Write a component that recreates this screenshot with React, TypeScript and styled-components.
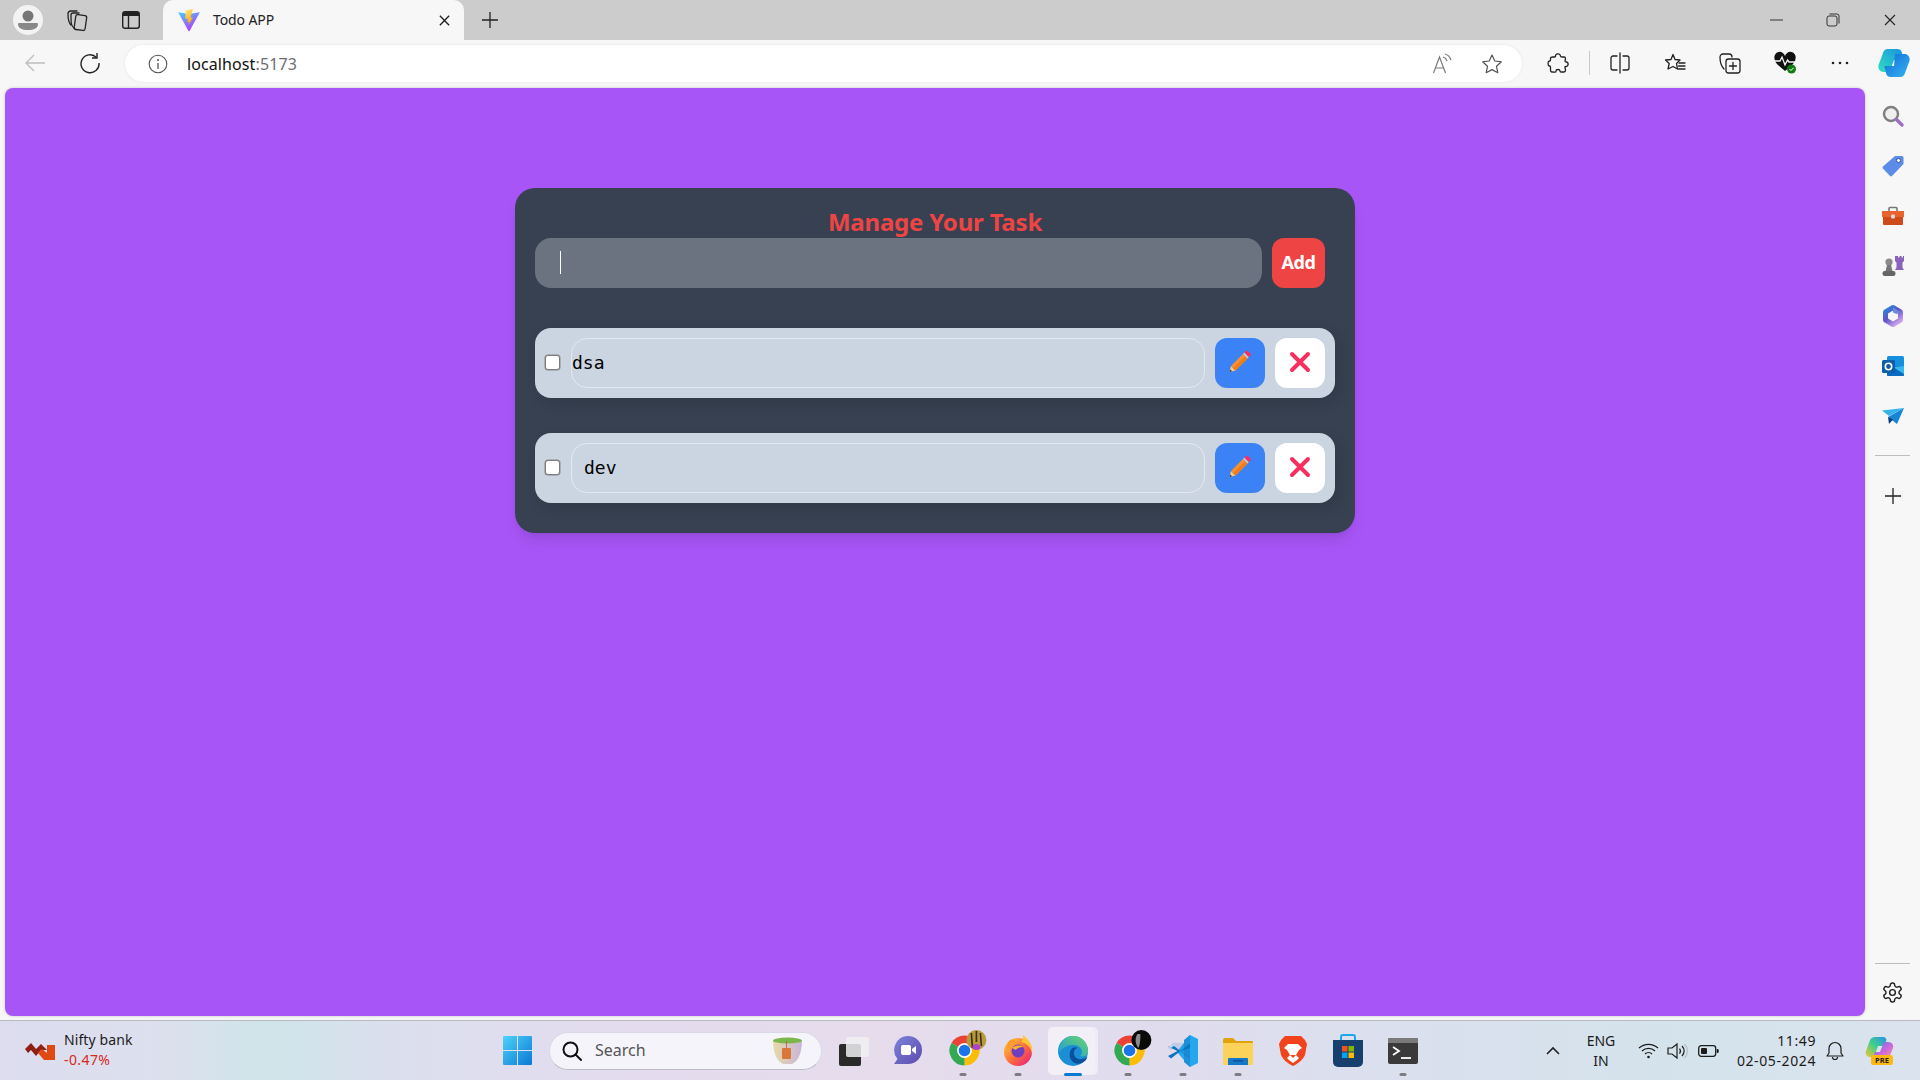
import React from "react";
import styled, { createGlobalStyle } from "styled-components";

const Global = createGlobalStyle`
  html, body { margin: 0; padding: 0; height: 100%; overflow: hidden; }
  body { font-family: "Noto Sans", "Open Sans", sans-serif; background: #f7f7f7; }
  #root { height: 100%; }
  * { box-sizing: border-box; }
`;

const Screen = styled.div`
  width: 1920px;
  height: 1080px;
  display: flex;
  flex-direction: column;
`;

/* ---------- browser chrome ---------- */
const TabStrip = styled.header`
  height: 40px;
  flex: none;
  background: #cccccc;
  display: flex;
  align-items: stretch;
  padding-left: 13px;
`;
const Avatar = styled.div`
  width: 30px;
  height: 30px;
  margin: 5px 8px 5px 0;
  border-radius: 50%;
  background: #f3f3f3;
  display: flex;
  align-items: center;
  justify-content: center;
`;
const Slot = styled.div<{ $w: number; $end?: boolean }>`
  width: ${(p) => p.$w}px;
  flex: none;
  display: flex;
  align-items: center;
  justify-content: ${(p) => (p.$end ? "flex-end" : "center")};
  position: relative;
`;
const Tab = styled.div`
  width: 301px;
  margin-left: 6px;
  background: #f7f7f7;
  border-radius: 10px 10px 0 0;
  display: flex;
  align-items: center;
  padding-left: 14px;
  font-size: 14px;
  color: #222;
`;
const TabTitle = styled.span`
  margin: 0 0 2px 12px;
  flex: 1;
  letter-spacing: -0.1px;
`;
const TabClose = styled.div`
  width: 40px;
  display: flex;
  justify-content: center;
`;
const WindowControls = styled.div`
  margin-left: auto;
  margin-right: 2px;
  display: flex;
`;
const Toolbar = styled.nav`
  height: 48px;
  flex: none;
  background: #f7f7f7;
  display: flex;
  align-items: flex-start;
  padding-left: 7px;
`;
const ToolSlot = styled(Slot)`
  height: 46px;
`;
const Address = styled.div`
  width: 1398px;
  height: 37px;
  margin: 5px 9px 0 8px;
  background: #ffffff;
  border-radius: 19px;
  display: flex;
  align-items: center;
  padding: 0 6px 0 23px;
  box-shadow: 0 0 3px rgba(0, 0, 0, 0.08);
  ${ToolSlot} { height: 37px; }
`;
const Url = styled.span`
  margin-left: 19px;
  flex: 1;
  font-size: 16px;
  color: #111;
  letter-spacing: 0.1px;
`;
const Port = styled.span`
  color: #6d6d6d;
`;
const ToolDivider = styled.div`
  width: 1px;
  height: 24px;
  margin: 11px 2px 0 4px;
  background: #c9c9c9;
  flex: none;
`;

const Middle = styled.div`
  flex: 1;
  min-height: 0;
  display: flex;
  padding-left: 5px;
  background: #f7f7f7;
`;
const Page = styled.main`
  width: 1860px;
  height: 928px;
  background: #a855f7;
  border-radius: 8px;
  padding-top: 100px;
  box-shadow: 0 0 3px rgba(0, 0, 0, 0.2);
`;
const Sidebar = styled.aside`
  flex: 1;
  display: flex;
  flex-direction: column;
  align-items: center;
`;
const SideIcon = styled.div`
  height: 50px;
  width: 100%;
  display: flex;
  align-items: center;
  justify-content: center;
  flex: none;
`;
const SideTop = styled.div`
  height: 3px;
  flex: none;
`;
const SideRule = styled.div`
  width: 35px;
  height: 1px;
  background: #bdbdbd;
  flex: none;
  margin: 14px 0 15px;
`;
const SideSpacer = styled.div`
  flex: 1;
`;
const SideFoot = styled.div`
  flex: none;
  width: 100%;
  display: flex;
  flex-direction: column;
  align-items: center;
  margin-bottom: 3px;
`;
const SideRuleFoot = styled(SideRule)`
  margin: 0 0 3px;
`;

/* ---------- todo app ---------- */
const Card = styled.section`
  width: 840px;
  height: 345px;
  margin: 0 auto;
  background: #374151;
  border-radius: 20px;
  padding: 20px;
  box-shadow: 0 10px 15px -3px rgba(0, 0, 0, 0.1), 0 4px 6px -4px rgba(0, 0, 0, 0.1);
`;
const Title = styled.h1`
  margin: 0;
  height: 30px;
  line-height: 28px;
  text-align: center;
  font-size: 24px;
  font-weight: 700;
  color: #ef4444;
  letter-spacing: -0.2px;
`;
const AddForm = styled.form`
  display: flex;
  gap: 10px;
  margin: 0 10px 40px 0;
`;
const AddField = styled.div`
  flex: 1;
  height: 50px;
  background: #6b7280;
  border-radius: 16px;
  display: flex;
  align-items: center;
  padding-left: 25px;
`;
const Caret = styled.span`
  width: 1px;
  height: 23px;
  margin-bottom: 2px;
  background: #ffffff;
  flex: none;
`;
const AddInput = styled.input`
  flex: 1;
  height: 100%;
  background: transparent;
  border: 0;
  outline: 0;
  padding: 0;
  color: #fff;
`;
const AddButton = styled.button`
  width: 53px;
  height: 50px;
  background: #ef4444;
  color: #ffffff;
  border: 0;
  border-radius: 12px;
  font: 700 18px "Noto Sans", sans-serif;
  letter-spacing: -0.4px;
  padding: 0 0 2px;
`;
const TodoList = styled.ul`
  list-style: none;
  margin: 0;
  padding: 0;
  display: flex;
  flex-direction: column;
  gap: 35px;
`;
const TodoRow = styled.li`
  height: 70px;
  background: #cbd5e1;
  border-radius: 16px;
  padding: 10px;
  display: flex;
  align-items: center;
  box-shadow: 5px 5px 15px rgba(0, 0, 0, 0.12);
`;
const Check = styled.input`
  appearance: none;
  width: 15px;
  height: 15px;
  margin: 0 11px 1px 0;
  flex: none;
  background: #ffffff;
  border: 1px solid #7d7d7d;
  border-radius: 3px;
  box-shadow: 0 0 0 0.5px #8a8a8a;
`;
const TodoText = styled.input<{ $indent: number }>`
  width: 634px;
  height: 50px;
  flex: none;
  background: transparent;
  border: 1px solid #e2e8f0;
  border-radius: 16px;
  outline: 0;
  padding: 0 0 2px ${(p) => p.$indent}px;
  font: 18px "DejaVu Sans Mono", monospace;
  color: #000;
`;
const IconButton = styled.button<{ $tone: "edit" | "remove" }>`
  width: 50px;
  height: 50px;
  flex: none;
  margin-left: 10px;
  background: ${(p) => (p.$tone === "edit" ? "#3b82f6" : "#ffffff")};
  border: 0;
  border-radius: 12px;
  padding: 0 0 2px;
  display: flex;
  align-items: center;
  justify-content: center;
`;

/* ---------- taskbar ---------- */
const Taskbar = styled.footer`
  height: 60px;
  flex: none;
  border-top: 1px solid #b9b9c2;
  background: linear-gradient(90deg, #dcdcee 0%, #dde0ee 8%, #cfe5ea 14%, #dcdfee 21%, #e3dcee 32%, #e6dcec 46%, #e0dcee 60%, #dbe0ee 72%, #d4e3ec 88%, #dbe3ee 100%);
  display: flex;
  align-items: center;
`;
const Widget = styled.div`
  width: 503px;
  flex: none;
  display: flex;
  align-items: center;
  padding-left: 25px;
`;
const WidgetText = styled.div`
  margin: 0 0 2px 9px;
  font-size: 14px;
  line-height: 20px;
  color: #1c1c1c;
  letter-spacing: 0.1px;
`;
const WidgetDelta = styled.div`
  color: #d42a1c;
  letter-spacing: 0.4px;
`;
const Search = styled.div`
  width: 273px;
  height: 38px;
  margin: 0 3px 0 17px;
  flex: none;
  background: #f4f4fa;
  border-radius: 19px;
  border: 1px solid #d9d9e6;
  border-bottom-color: #bcbcc8;
  display: flex;
  align-items: center;
  padding: 0 18px 0 11px;
  font-size: 16px;
  color: #555;
`;
const SearchLabel = styled.span`
  margin: 0 0 1px 12px;
  flex: 1;
  letter-spacing: 0;
`;
const AppSlot = styled.div<{ $active?: boolean }>`
  width: 55px;
  height: 48px;
  flex: none;
  position: relative;
  display: flex;
  align-items: center;
  justify-content: center;
  ${(p) =>
    p.$active
      ? `&::before {
          content: "";
          position: absolute;
          inset: 0 5px 0 3px;
          border-radius: 5px;
          background: rgba(255,255,255,0.55);
          box-shadow: 3px 0 0 rgba(255,255,255,0.45);
        }
        & > svg { position: relative; margin-left: 1px; }`
      : ""}
`;
const RunDot = styled.span<{ $active?: boolean }>`
  position: absolute;
  bottom: -1px;
  left: 50%;
  transform: translateX(-50%);
  width: ${(p) => (p.$active ? 18 : 7)}px;
  height: 3px;
  border-radius: 2px;
  background: ${(p) => (p.$active ? "#0a78d4" : "#7c7c82")};
`;
const Tray = styled.div`
  margin-left: auto;
  display: flex;
  align-items: center;
  padding-right: 14px;
`;
const TrayText = styled.div`
  font-size: 14px;
  line-height: 20px;
  color: #1c1c1c;
  text-align: center;
`;
const Clock = styled(TrayText)`
  text-align: right;
  white-space: nowrap;
  letter-spacing: 0.6px;
`;

/* ---------- icons ---------- */
const line = { fill: "none", stroke: "#222", strokeWidth: 1.3, strokeLinecap: "round", strokeLinejoin: "round" } as const;

const Person = () => (
  <svg width="22" height="24" viewBox="0 0 22 24">
    <circle cx="11" cy="8" r="5.5" fill="#777" />
    <path d="M2 15 h18 a1 1 0 0 1 1 1 c0 4-4 6-10 6 s-10-2-10-6 a1 1 0 0 1 1-1z" fill="#888" />
  </svg>
);
const Collections = () => (
  <svg width="24" height="24" viewBox="0 0 24 24" {...line}>
    <rect x="9" y="7" width="11" height="15" rx="2" transform="rotate(8 14 14)" />
    <path d="M8 20 C5 18 5 15 5 7 a2 2 0 0 1 2-2 h6" />
    <path d="M5 17 C3 15 2 13 2 6 a3 3 0 0 1 3-3 h6" />
  </svg>
);
const TabsIcon = () => (
  <svg width="22" height="22" viewBox="0 0 22 22">
    <rect x="2.7" y="2.7" width="16.6" height="16.6" rx="2.5" fill="none" stroke="#222" strokeWidth="1.4" />
    <path d="M3 5 a2 2 0 0 1 2-2 h12 a2 2 0 0 1 2 2 v2 H3z" fill="#222" />
    <path d="M8.5 7 v12" stroke="#222" strokeWidth="1.4" />
  </svg>
);
const Vite = () => (
  <svg width="24" height="24" viewBox="0 0 22 22">
    <defs>
      <linearGradient id="va" x1="0" y1="0" x2="0.6" y2="1">
        <stop offset="0" stopColor="#41d1ff" />
        <stop offset="1" stopColor="#bd34fe" />
      </linearGradient>
      <linearGradient id="vb" x1="0" y1="0" x2="0.3" y2="1">
        <stop offset="0" stopColor="#ffea83" />
        <stop offset="1" stopColor="#ffa800" />
      </linearGradient>
    </defs>
    <path d="M1 4 L11 5.5 L21 4 L11.5 21 a.6 .6 0 0 1-1 0z" fill="url(#va)" />
    <path d="M14.5 1 L8 2.4 L7.6 10 L10 9.6 L9.4 13 L11 12.6 L10.6 15.5 L14.6 8.6 L12.4 9 Z" fill="url(#vb)" />
  </svg>
);
const Cross = ({ s = 14, w = 1.4 }: { s?: number; w?: number }) => (
  <svg width={s} height={s} viewBox="0 0 14 14">
    <path d="M2 2 L12 12 M12 2 L2 12" stroke="#222" strokeWidth={w} fill="none" />
  </svg>
);
const Plus = () => (
  <svg width="18" height="18" viewBox="0 0 18 18">
    <path d="M9 1 V17 M1 9 H17" stroke="#222" strokeWidth="1.3" />
  </svg>
);
const Minimize = () => (
  <svg width="14" height="14" viewBox="0 0 14 14">
    <path d="M1 7 H14" stroke="#333" strokeWidth="1" />
  </svg>
);
const Restore = () => (
  <svg width="14" height="14" viewBox="0 0 14 14" fill="none" stroke="#333" strokeWidth="1">
    <rect x="1" y="3" width="10" height="10" rx="2" />
    <path d="M3.5 1 H11 a2 2 0 0 1 2 2 V10.5" />
  </svg>
);
const Back = () => (
  <svg width="22" height="20" viewBox="0 0 22 20" fill="none" stroke="#bdbdbd" strokeWidth="1.4">
    <path d="M21 10 H2 M10 2 L2 10 L10 18" />
  </svg>
);
const Reload = () => (
  <svg width="22" height="22" viewBox="0 0 22 22" fill="none" stroke="#222" strokeWidth="1.4">
    <path d="M17.5 5.5 A9 9 0 1 0 20 11" />
    <path d="M18 1 V6 H13" />
  </svg>
);
const Info = () => (
  <svg width="20" height="20" viewBox="0 0 20 20">
    <circle cx="10" cy="10" r="8.8" fill="none" stroke="#555" strokeWidth="1.1" />
    <circle cx="10" cy="6" r="1" fill="#555" />
    <path d="M10 9 V15" stroke="#555" strokeWidth="1.3" />
  </svg>
);
const ReadAloud = () => (
  <svg width="22" height="22" viewBox="0 0 22 22" fill="none" stroke="#7a7a7a" strokeWidth="1.2">
    <path d="M1.5 20 L7.5 4 L13.5 20 M3.5 15 H11.5" />
    <path d="M11 4 a6 6 0 0 1 4 4 M13 1 a9 9 0 0 1 6 6" />
  </svg>
);
const Star = ({ c = "#555" }: { c?: string }) => (
  <svg width="22" height="22" viewBox="0 0 22 22" fill="none" stroke={c} strokeWidth="1.2" strokeLinejoin="round">
    <path d="M11 2 L13.8 8 L20.4 8.8 L15.5 13.3 L16.8 19.8 L11 16.6 L5.2 19.8 L6.5 13.3 L1.6 8.8 L8.2 8Z" />
  </svg>
);
const Puzzle = () => (
  <svg width="22" height="22" viewBox="0 0 22 22" {...line}>
    <path d="M8.5 4.5 C8 1.5 13 0.5 13.5 4 C13.6 5 14.5 5 15 5 H17.5 C18.5 5 18.5 6 18.5 7 L18 9 C18 10 19 10 19.5 10 C22 10.5 21.5 15 18.5 14.5 C18 14.4 18 15 18 15.5 L18.5 18 C18.5 19 18 20 17 20 H14 C13 20 13 19.5 13 19 C13 17 9 17 9 19 C9 20 8.5 20.2 8 20.2 L5 20 C4 20 3.5 19 3.5 18 V15 C3.5 14.5 3 14 2.5 14 C0.5 13.5 0.5 9.5 2.5 9 C3 9 3.5 8.5 3.5 8 V6.5 C3.5 5.5 4.5 5 5.5 5 H7.5 C8 5 8.5 5 8.5 4.5Z" />
  </svg>
);
const Split = () => (
  <svg width="22" height="22" viewBox="0 0 22 22" {...line}>
    <path d="M8 4 H4 a2 2 0 0 0-2 2 V16 a2 2 0 0 0 2 2 H8 M14 4 H18 a2 2 0 0 1 2 2 V16 a2 2 0 0 1-2 2 H14 M11 1 V21" />
  </svg>
);
const Favorites = () => (
  <svg width="22" height="22" viewBox="0 0 22 22" {...line}>
    <path d="M9 2.5 L11 7.5 L16 8 L12.5 11.5 L13.5 17 L9 14.5 L4 17 L5.2 11.5 L1.5 8 L7 7.5Z" />
    <path d="M15 11 H21 M14.5 14 H21 M14.5 17 H21" />
  </svg>
);
const CollectionsAdd = () => (
  <svg width="22" height="22" viewBox="0 0 22 22" {...line}>
    <rect x="7" y="7" width="14" height="14" rx="2.5" />
    <path d="M14 10.5 V17.5 M10.5 14 H17.5" />
    <path d="M5 17 C2 14 1 8 1 5 a3 3 0 0 1 3-3 h6 a3 3 0 0 1 3 3" />
  </svg>
);
const Health = () => (
  <svg width="24" height="24" viewBox="0 0 24 24">
    <path d="M12 20 C6 15 1.5 12 1.5 7.5 A5 5 0 0 1 12 5 A5 5 0 0 1 22.5 7.5 C22.5 12 18 15 12 20Z" fill="#111" />
    <path d="M1 10 H7 L9 6 L12 14 L14.5 9 L16 11 H23" fill="none" stroke="#f7f7f7" strokeWidth="1.3" />
    <circle cx="18.5" cy="18" r="4.5" fill="#107c10" />
    <path d="M16.5 18 L18 19.5 L20.6 16.8" stroke="#fff" strokeWidth="1" fill="none" />
  </svg>
);
const Dots = () => (
  <svg width="18" height="4" viewBox="0 0 18 4">
    <circle cx="2" cy="2" r="1.3" fill="#222" />
    <circle cx="9" cy="2" r="1.3" fill="#222" />
    <circle cx="16" cy="2" r="1.3" fill="#222" />
  </svg>
);
const Copilot = () => (
  <svg width="32" height="30" viewBox="0 0 30 30" preserveAspectRatio="none">
    <defs>
      <linearGradient id="cpa" x1="0" y1="1" x2="1" y2="0">
        <stop offset="0" stopColor="#2fe0c0" />
        <stop offset="1" stopColor="#1a8fe0" />
      </linearGradient>
      <linearGradient id="cpb" x1="0" y1="0" x2="1" y2="1">
        <stop offset="0" stopColor="#0f6cd8" />
        <stop offset="1" stopColor="#37b4f0" />
      </linearGradient>
    </defs>
    <path d="M9 1 H18 C20.5 1 22 2.5 22.5 5 L24 12 H15 L11 24 H5 C1.5 24 -0.5 20 0.7 16.5 L5 4 C5.8 2 7 1 9 1Z" fill="url(#cpa)" />
    <path d="M16 6 H25 C28.5 6 30.5 10 29.3 13.5 L25 26 C24.2 28 23 29 21 29 H12 C9.5 29 8 27.5 7.5 25 L6 18 H15 Z" fill="url(#cpb)" />
  </svg>
);

const SearchGlass = () => (
  <svg width="24" height="24" viewBox="0 0 24 24">
    <circle cx="10" cy="10" r="7" fill="#ddd" fillOpacity="0.3" stroke="#7f7f7f" strokeWidth="2.4" />
    <path d="M15.5 15.5 L21 21" stroke="#9b6fc9" strokeWidth="3.4" strokeLinecap="round" />
  </svg>
);
const TagIcon = () => (
  <svg width="24" height="24" viewBox="0 0 24 24">
    <path d="M14 2 H21 a1.5 1.5 0 0 1 1.5 1.5 V10 L11 22 a1.5 1.5 0 0 1-2 0 L2 14.5 a1.5 1.5 0 0 1 0-2Z" fill="#5b8de8" />
    <circle cx="17.5" cy="6.5" r="2" fill="#fff" stroke="#3c55a5" strokeWidth="1" />
  </svg>
);
const Toolbox = () => (
  <svg width="24" height="24" viewBox="0 0 24 24">
    <path d="M8 7 V4.5 a1 1 0 0 1 1-1 h6 a1 1 0 0 1 1 1 V7" fill="none" stroke="#777" strokeWidth="1.6" />
    <path d="M1 7 H23 V13 H1Z" fill="#e8642c" />
    <path d="M2 13 H22 V20 a1 1 0 0 1-1 1 H3 a1 1 0 0 1-1-1Z" fill="#cf4a1a" />
    <rect x="10" y="10.5" width="4" height="4" rx="1" fill="#d8d8d8" />
  </svg>
);
const Chess = () => (
  <svg width="24" height="24" viewBox="0 0 24 24">
    <path d="M15 2 h2 v1.5 h1.5 V2 h2 v1.5 H22 V2 h1 v5 l-1.5 1.5 v5 L23 16 H14 l1.5-2.5 v-5 L14 7 V2z" fill="#8a63bd" />
    <circle cx="8" cy="8" r="3.6" fill="#8a8a8a" />
    <path d="M6 11 h4 L11.5 17 h-7z" fill="#777" />
    <rect x="1.5" y="17" width="13" height="5" rx="2.2" fill="#666" />
  </svg>
);
const M365 = () => (
  <svg width="24" height="24" viewBox="0 0 24 24">
    <defs>
      <linearGradient id="m1" x1="0" y1="0" x2="0.7" y2="1">
        <stop offset="0" stopColor="#2a8ad6" />
        <stop offset="0.5" stopColor="#5f52c4" />
        <stop offset="1" stopColor="#c9a0ec" />
      </linearGradient>
    </defs>
    <path d="M12 3.5 L19.5 8 V16 L12 20.5 L4.5 16 V8Z" fill="#f7f7f7" stroke="url(#m1)" strokeWidth="5" strokeLinejoin="round" />
    <circle cx="12" cy="12" r="3.6" fill="#f7f7f7" />
    <path d="M12 3.5 L19.5 8 L15.5 10 L12 8.4 Z" fill="#6b8ae0" />
  </svg>
);
const Outlook = () => (
  <svg width="24" height="24" viewBox="0 0 24 24">
    <rect x="6" y="2" width="17" height="20" rx="1.5" fill="#1490df" />
    <path d="M6 12 L23 12 V21 a1 1 0 0 1-1 1 H7 a1 1 0 0 1-1-1Z" fill="#0a6cc0" />
    <path d="M12 13 L23 20 V12Z" fill="#35b8f1" />
    <rect x="1" y="6" width="13" height="13" rx="1.5" fill="#0d5dab" />
    <circle cx="7.5" cy="12.5" r="3.2" fill="none" stroke="#fff" strokeWidth="1.6" />
  </svg>
);
const SendIcon = () => (
  <svg width="24" height="24" viewBox="0 0 24 24">
    <path d="M1 6.5 L23 4 L8 12Z" fill="#36b3ec" />
    <path d="M23 4 L16 20 L7 13Z" fill="#1785d6" />
    <path d="M7 13 L8 20 L12 15.5Z" fill="#0b3d78" />
  </svg>
);
const Gear = () => (
  <svg width="23" height="23" viewBox="0 0 24 24" fill="none" stroke="#222" strokeWidth="1.5" strokeLinejoin="round">
    <path d="M12.2 2h-.4a2 2 0 0 0-2 2v.2a2 2 0 0 1-1 1.7l-.4.3a2 2 0 0 1-2 0l-.2-.1a2 2 0 0 0-2.7.7l-.2.4a2 2 0 0 0 .7 2.7l.2.1a2 2 0 0 1 1 1.7v.5a2 2 0 0 1-1 1.7l-.2.1a2 2 0 0 0-.7 2.7l.2.4a2 2 0 0 0 2.7.7l.2-.1a2 2 0 0 1 2 0l.4.3a2 2 0 0 1 1 1.7v.2a2 2 0 0 0 2 2h.4a2 2 0 0 0 2-2v-.2a2 2 0 0 1 1-1.7l.4-.3a2 2 0 0 1 2 0l.2.1a2 2 0 0 0 2.7-.7l.2-.4a2 2 0 0 0-.7-2.7l-.2-.1a2 2 0 0 1-1-1.7v-.5a2 2 0 0 1 1-1.7l.2-.1a2 2 0 0 0 .7-2.7l-.2-.4a2 2 0 0 0-2.7-.7l-.2.1a2 2 0 0 1-2 0l-.4-.3a2 2 0 0 1-1-1.7V4a2 2 0 0 0-2-2z" />
    <circle cx="12" cy="12" r="3" />
  </svg>
);

const Pencil = () => (
  <svg width="24" height="24" viewBox="0 0 24 24">
    <path d="M1.5 22 L3 16 L7.5 20.5Z" fill="#f6c98d" />
    <path d="M1.5 22 L2.2 19.4 L4.1 21.3Z" fill="#3a3a3a" />
    <path d="M3 16 L15 4 L19.5 8.5 L7.5 20.5Z" fill="#fb8f2c" />
    <path d="M5.2 18.3 L17.2 6.3 L19.5 8.5 L7.5 20.5Z" fill="#f07d1a" />
    <path d="M15 4 L16.4 2.6 L20.9 7.1 L19.5 8.5Z" fill="#c9c9cf" />
    <path d="M16.4 2.6 L17.8 1.2 a1.6 1.6 0 0 1 2.2 0 L22.3 3.5 a1.6 1.6 0 0 1 0 2.2 L20.9 7.1Z" fill="#f92f60" />
  </svg>
);
const RedX = () => (
  <svg width="24" height="24" viewBox="0 0 24 24">
    <path d="M4 4 L20 20 M20 4 L4 20" stroke="#f92f60" strokeWidth="4" strokeLinecap="round" />
  </svg>
);

const Nifty = () => (
  <svg width="30" height="18" viewBox="0 0 30 18">
    <path d="M0 7 L6 1 L11 7 L16 2 L22 8 H16 L11 14 L6 8 L3 11Z" fill="#8e1f12" />
    <path d="M13 11 L17 7 L22 11 V3 H30 V18 H19Z" fill="#e04a12" />
  </svg>
);
const WinLogo = () => (
  <svg width="29" height="29" viewBox="0 0 29 29">
    <defs>
      <linearGradient id="wl" x1="0" y1="0" x2="1" y2="1">
        <stop offset="0" stopColor="#4fd2fb" />
        <stop offset="1" stopColor="#0a78d4" />
      </linearGradient>
    </defs>
    <path d="M0 1 a1 1 0 0 1 1-1 H14 V14 H0Z M15 0 H28 a1 1 0 0 1 1 1 V14 H15Z M0 15 H14 V29 H1 a1 1 0 0 1-1-1Z M15 15 H29 V28 a1 1 0 0 1-1 1 H15Z" fill="url(#wl)" />
  </svg>
);
const TaskSearch = () => (
  <svg width="22" height="22" viewBox="0 0 22 22" fill="none" stroke="#111" strokeWidth="2">
    <circle cx="9.5" cy="9.5" r="7" />
    <path d="M14.5 14.5 L20 20" strokeLinecap="round" />
  </svg>
);
const TeaCup = () => (
  <svg width="31" height="28" viewBox="0 0 31 28">
    <defs>
      <linearGradient id="tc" x1="0" y1="0" x2="1" y2="0">
        <stop offset="0" stopColor="#e9d9a8" />
        <stop offset="1" stopColor="#c8b5d8" />
      </linearGradient>
    </defs>
    <path d="M1 3 H30 C30 14 27 24 20 27 H11 C4 24 1 14 1 3Z" fill="url(#tc)" />
    <ellipse cx="15.5" cy="3.5" rx="14.5" ry="3" fill="#7ab648" />
    <rect x="10" y="11" width="9" height="11" rx="1" fill="#d9763c" />
    <path d="M14.5 4 V11" stroke="#b56" strokeWidth="0.8" />
  </svg>
);
const TaskView = () => (
  <svg width="30" height="30" viewBox="0 0 30 30" style={{ marginLeft: 3 }}>
    <rect x="0" y="8" width="22" height="22" rx="2" fill="#2a2a2a" />
    <rect x="7" y="1" width="23" height="20" rx="2" fill="#f0f0f2" fillOpacity="0.85" />
  </svg>
);
const MeetIcon = () => (
  <svg width="30" height="32" viewBox="0 0 30 32">
    <defs>
      <linearGradient id="mt" x1="0" y1="0" x2="1" y2="1">
        <stop offset="0" stopColor="#7b83d8" />
        <stop offset="1" stopColor="#5e4bb0" />
      </linearGradient>
    </defs>
    <path d="M15 1 A14 14 0 0 1 15 29 H1 L4.5 24 A14 14 0 0 1 15 1Z" fill="url(#mt)" />
    <rect x="8" y="10" width="10" height="10" rx="2" fill="#fff" />
    <path d="M19 14 L23 11 V19 L19 16Z" fill="#fff" />
  </svg>
);
const ChromeIcon = ({ badge }: { badge: "gold" | "dark" }) => (
  <svg width="48" height="44" viewBox="0 0 48 44">
    <g transform="translate(10.5 6.5)">
      <path d="M15 15 L2 7.5 A15 15 0 0 1 28 7.5Z" fill="#ea4335" />
      <path d="M15 15 L28 7.5 A15 15 0 0 1 15 30Z" fill="#fbbc04" />
      <path d="M15 15 L15 30 A15 15 0 0 1 2 7.5Z" fill="#34a853" />
      <circle cx="15" cy="15" r="7.4" fill="#fff" />
      <circle cx="15" cy="15" r="5.8" fill="#1a73e8" />
    </g>
    {badge === "gold" ? (
      <g>
        <circle cx="37.4" cy="11" r="10" fill="#b89a3c" />
        <path d="M32.4 4 L33.4 19 M37.4 2 V13 M41.4 4 L42.4 17" stroke="#3a2e10" strokeWidth="1.6" />
        <ellipse cx="37.4" cy="18" rx="4" ry="3" fill="#b044c8" />
      </g>
    ) : (
      <g>
        <circle cx="37.4" cy="11" r="10" fill="#0a0a0a" />
        <path d="M33.4 5 C30.4 9 31.4 16 34.4 19 C36.4 15 36.4 9 36.4 5Z" fill="#8a8a8a" />
      </g>
    )}
  </svg>
);
const FirefoxIcon = () => (
  <svg width="30" height="32" viewBox="0 0 30 32" style={{ marginBottom: 2 }}>
    <defs>
      <linearGradient id="ff" x1="0" y1="0" x2="1" y2="1">
        <stop offset="0" stopColor="#ffd43b" />
        <stop offset="0.5" stopColor="#ff7139" />
        <stop offset="1" stopColor="#e31587" />
      </linearGradient>
    </defs>
    <circle cx="15" cy="18" r="14" fill="url(#ff)" />
    <path d="M20 1 C28 7 30 13 29 19 C27 11 22 9 18 8 C20 6 20 4 20 1Z" fill="#ffc83a" />
    <path d="M6 7 C10 4 13 6 14 9 C9 9 6 12 6 16 C3 14 4 9 6 7Z" fill="#ff9d2a" />
    <circle cx="15" cy="17" r="6.5" fill="#6d3fc0" />
    <path d="M9 14 C12 11 18 11 20 13 C17 13 14 14 13 16Z" fill="#ffb02e" />
  </svg>
);
const EdgeIcon = () => (
  <svg width="32" height="32" viewBox="0 0 32 32">
    <defs>
      <linearGradient id="eg" x1="0" y1="1" x2="1" y2="0">
        <stop offset="0" stopColor="#1a9ad8" />
        <stop offset="1" stopColor="#6ed66b" />
      </linearGradient>
    </defs>
    <circle cx="16" cy="16" r="15" fill="#1b8fd6" />
    <path d="M16 1 A15 15 0 0 1 31 17 C31 21 27 22 23 21 C27 18 25 10 16 10 C10 10 5 13 1.5 19 C1 9 8 1 16 1Z" fill="url(#eg)" />
    <path d="M13 17 C11 24 17 31 25 28 C28 26.5 29.5 25 30.5 21.5 C26 26 18 25 17 19 C16.5 15 19 13 21 13 C17 11 14 13 13 17Z" fill="#0c4f9c" />
  </svg>
);
const VsCode = () => (
  <svg width="30" height="34" viewBox="0 0 30 34">
    <path d="M22 1 L30 5 V29 L22 33 L9 18 Z" fill="#24a7ee" />
    <path d="M22 1 V33 L16 28 V6Z" fill="#1e8fd8" />
    <path d="M22 9.5 V24.5 L7 13 L3 16 L0 14 L5.5 8.5 Z" fill="#0d78c4" fillOpacity="0.15" />
    <path d="M22 24.5 L6 12 L3 14 L0 12 V12.5 L9.5 17 L0 22 L3 24.5 L22 9.5 V14 L13 17 L22 24Z" fill="#0a74c2" />
  </svg>
);
const Folder = () => (
  <svg width="30" height="30" viewBox="0 0 30 30">
    <path d="M0 4 a2 2 0 0 1 2-2 H10 L13 5 H29 a1 1 0 0 1 1 1 V10 H0Z" fill="#e0a30a" />
    <path d="M0 7 H30 V28 a1 1 0 0 1-1 1 H1 a1 1 0 0 1-1-1Z" fill="#fbd35a" />
    <path d="M5 29 V23 a1 1 0 0 1 1-1 H24 a1 1 0 0 1 1 1 V29Z" fill="#1478c8" />
    <rect x="10" y="24" width="10" height="1.6" fill="#0d5596" />
  </svg>
);
const Brave = () => (
  <svg width="28" height="32" viewBox="0 0 28 32">
    <path d="M6 1 H22 L26 5 L28 9 L26 20 C24 25 18 29 14 31 C10 29 4 25 2 20 L0 9 L2 5Z" fill="#f1441c" />
    <path d="M14 28 C11 26 9 24 8 23 L11 20 L8 15 L5 13 L9 9 H19 L23 13 L20 15 L17 20 L20 23 C19 24 17 26 14 28Z" fill="#fff" />
    <path d="M11 20 H17 L14 23Z" fill="#f1441c" />
  </svg>
);
const StoreIcon = () => (
  <svg width="30" height="34" viewBox="0 0 30 34">
    <path d="M8 7 V3 a2 2 0 0 1 2-2 H20 a2 2 0 0 1 2 2 V7" fill="none" stroke="#1fa8e8" strokeWidth="2" />
    <path d="M0 6 H30 V28 a5 5 0 0 1-5 5 H5 a5 5 0 0 1-5-5Z" fill="#18406f" />
    <rect x="9" y="12" width="5.5" height="5.5" fill="#f25022" />
    <rect x="15.5" y="12" width="5.5" height="5.5" fill="#7fba00" />
    <rect x="9" y="18.5" width="5.5" height="5.5" fill="#00a4ef" />
    <rect x="15.5" y="18.5" width="5.5" height="5.5" fill="#ffb900" />
  </svg>
);
const TerminalIcon = () => (
  <svg width="30" height="26" viewBox="0 0 30 26">
    <rect width="30" height="26" rx="2" fill="#3a3a3a" />
    <path d="M0 2 a2 2 0 0 1 2-2 H28 a2 2 0 0 1 2 2 V5 H0Z" fill="#7a7a7a" />
    <path d="M5 9 L11 13 L5 17" fill="none" stroke="#fff" strokeWidth="1.8" />
    <path d="M13 20 H23" stroke="#fff" strokeWidth="1.8" />
  </svg>
);
const Chevron = () => (
  <svg width="16" height="10" viewBox="0 0 16 10" fill="none" stroke="#222" strokeWidth="1.6">
    <path d="M2 8 L8 2 L14 8" />
  </svg>
);
const Wifi = () => (
  <svg width="21" height="17" viewBox="0 0 21 17" fill="none" stroke="#1c1c1c" strokeWidth="1.3">
    <path d="M1 6 a14 14 0 0 1 19 0 M4 9 a9.5 9.5 0 0 1 13 0 M7 12 a5 5 0 0 1 7 0" />
    <circle cx="10.5" cy="15" r="1.3" fill="#1c1c1c" stroke="none" />
  </svg>
);
const Speaker = () => (
  <svg width="21" height="18" viewBox="0 0 21 18" fill="none" stroke="#1c1c1c" strokeWidth="1.2">
    <path d="M1 6 H5 L10 2 V16 L5 12 H1Z" />
    <path d="M12.5 6.5 a4 4 0 0 1 0 5 M15 4 a7 7 0 0 1 0 10" />
    <path d="M17.5 2 a10 10 0 0 1 0 14" stroke="#bbb" />
  </svg>
);
const Battery = () => (
  <svg width="21" height="12" viewBox="0 0 21 12">
    <rect x="0.7" y="0.7" width="17" height="10.6" rx="2.5" fill="none" stroke="#1c1c1c" strokeWidth="1.3" />
    <rect x="3" y="3" width="6" height="6" rx="1" fill="#1c1c1c" />
    <rect x="18.7" y="4" width="2" height="4" rx="1" fill="#1c1c1c" />
  </svg>
);
const Bell = () => (
  <svg width="18" height="20" viewBox="0 0 18 20" fill="none" stroke="#1c1c1c" strokeWidth="1.2">
    <path d="M1 15 L3 12 V7.5 a6 6 0 0 1 12 0 V12 L17 15Z" strokeLinejoin="round" />
    <path d="M6.5 16 a2.5 2.5 0 0 0 5 0" />
  </svg>
);
const CopilotPre = () => (
  <svg width="30" height="30" viewBox="0 0 30 30">
    <defs>
      <linearGradient id="cqa" x1="0" y1="1" x2="1" y2="0">
        <stop offset="0" stopColor="#f4c430" />
        <stop offset="0.5" stopColor="#3fcf8e" />
        <stop offset="1" stopColor="#2a8fe8" />
      </linearGradient>
      <linearGradient id="cqb" x1="0" y1="0" x2="1" y2="1">
        <stop offset="0" stopColor="#5a6fe8" />
        <stop offset="0.6" stopColor="#d46ad8" />
        <stop offset="1" stopColor="#f0a0a0" />
      </linearGradient>
    </defs>
    <path d="M10 1 H18 C20 1 21 2 21.5 4 L19 10 H13 L9 21 H5 C2 21 0 18 1 15 L5 4 C6 2 8 1 10 1Z" fill="url(#cqa)" />
    <path d="M19 6 H23 C27 6 29 9 28 12 L24 22 H8 L10 16 H15Z" fill="url(#cqb)" />
    <rect x="6" y="19" width="22" height="10" rx="2.5" fill="#fdb813" />
    <text x="17" y="27" fontFamily="'Noto Sans', sans-serif" fontSize="7.6" fontWeight="700" textAnchor="middle" fill="#222">PRE</text>
  </svg>
);

export default function App() {
  return (
    <Screen>
      <Global />
      <TabStrip>
        <Avatar><Person /></Avatar>
        <Slot $w={53}><Collections /></Slot>
        <Slot $w={53}><TabsIcon /></Slot>
        <Tab>
          <Vite />
          <TabTitle>Todo APP</TabTitle>
          <TabClose><Cross s={13} w={1.5} /></TabClose>
        </Tab>
        <Slot $w={52}><Plus /></Slot>
        <WindowControls>
          <Slot $w={57}><Minimize /></Slot>
          <Slot $w={57}><Restore /></Slot>
          <Slot $w={57}><Cross s={14} w={1.1} /></Slot>
        </WindowControls>
      </TabStrip>

      <Toolbar>
        <ToolSlot $w={55}><Back /></ToolSlot>
        <ToolSlot $w={55}><Reload /></ToolSlot>
        <Address>
          <Info />
          <Url>localhost<Port>:5173</Port></Url>
          <ToolSlot $w={49}><ReadAloud /></ToolSlot>
          <ToolSlot $w={49}><Star /></ToolSlot>
        </Address>
        <ToolSlot $w={54}><Puzzle /></ToolSlot>
        <ToolDivider />
        <ToolSlot $w={55}><Split /></ToolSlot>
        <ToolSlot $w={55}><Favorites /></ToolSlot>
        <ToolSlot $w={55}><CollectionsAdd /></ToolSlot>
        <ToolSlot $w={55}><Health /></ToolSlot>
        <ToolSlot $w={55}><Dots /></ToolSlot>
        <ToolSlot $w={53}><Copilot /></ToolSlot>
      </Toolbar>

      <Middle>
        <Page>
          <Card>
            <Title>Manage Your Task</Title>
            <AddForm>
              <AddField>
                <Caret />
                <AddInput type="text" aria-label="New task" />
              </AddField>
              <AddButton type="button">Add</AddButton>
            </AddForm>
            <TodoList>
              {[
                { text: "dsa", indent: 0 },
                { text: "dev", indent: 12 },
              ].map((t) => (
                <TodoRow key={t.text}>
                  <Check type="checkbox" aria-label={t.text} />
                  <TodoText $indent={t.indent} value={t.text} readOnly />
                  <IconButton $tone="edit" type="button" aria-label="Edit"><Pencil /></IconButton>
                  <IconButton $tone="remove" type="button" aria-label="Delete"><RedX /></IconButton>
                </TodoRow>
              ))}
            </TodoList>
          </Card>
        </Page>
        <Sidebar>
          <SideTop />
          <SideIcon><SearchGlass /></SideIcon>
          <SideIcon><TagIcon /></SideIcon>
          <SideIcon><Toolbox /></SideIcon>
          <SideIcon><Chess /></SideIcon>
          <SideIcon><M365 /></SideIcon>
          <SideIcon><Outlook /></SideIcon>
          <SideIcon><SendIcon /></SideIcon>
          <SideRule />
          <SideIcon><Plus /></SideIcon>
          <SideSpacer />
          <SideFoot>
            <SideRuleFoot />
            <SideIcon><Gear /></SideIcon>
          </SideFoot>
        </Sidebar>
      </Middle>

      <Taskbar>
        <Widget>
          <Nifty />
          <WidgetText>
            Nifty bank
            <WidgetDelta>-0.47%</WidgetDelta>
          </WidgetText>
        </Widget>
        <WinLogo />
        <Search>
          <TaskSearch />
          <SearchLabel>Search</SearchLabel>
          <TeaCup />
        </Search>
        <AppSlot><TaskView /></AppSlot>
        <AppSlot><MeetIcon /></AppSlot>
        <AppSlot><ChromeIcon badge="gold" /><RunDot /></AppSlot>
        <AppSlot><FirefoxIcon /><RunDot /></AppSlot>
        <AppSlot $active><EdgeIcon /><RunDot $active /></AppSlot>
        <AppSlot><ChromeIcon badge="dark" /><RunDot /></AppSlot>
        <AppSlot><VsCode /><RunDot /></AppSlot>
        <AppSlot><Folder /><RunDot /></AppSlot>
        <AppSlot><Brave /></AppSlot>
        <AppSlot><StoreIcon /></AppSlot>
        <AppSlot><TerminalIcon /><RunDot /></AppSlot>
        <Tray>
          <Slot $w={36}><Chevron /></Slot>
          <Slot $w={60}><TrayText>ENG<br />IN</TrayText></Slot>
          <Slot $w={34}><Wifi /></Slot>
          <Slot $w={24}><Speaker /></Slot>
          <Slot $w={38}><Battery /></Slot>
          <Slot $w={89} $end><Clock>11:49<br />02-05-2024</Clock></Slot>
          <Slot $w={38}><Bell /></Slot>
          <Slot $w={52}><CopilotPre /></Slot>
        </Tray>
      </Taskbar>
    </Screen>
  );
}
